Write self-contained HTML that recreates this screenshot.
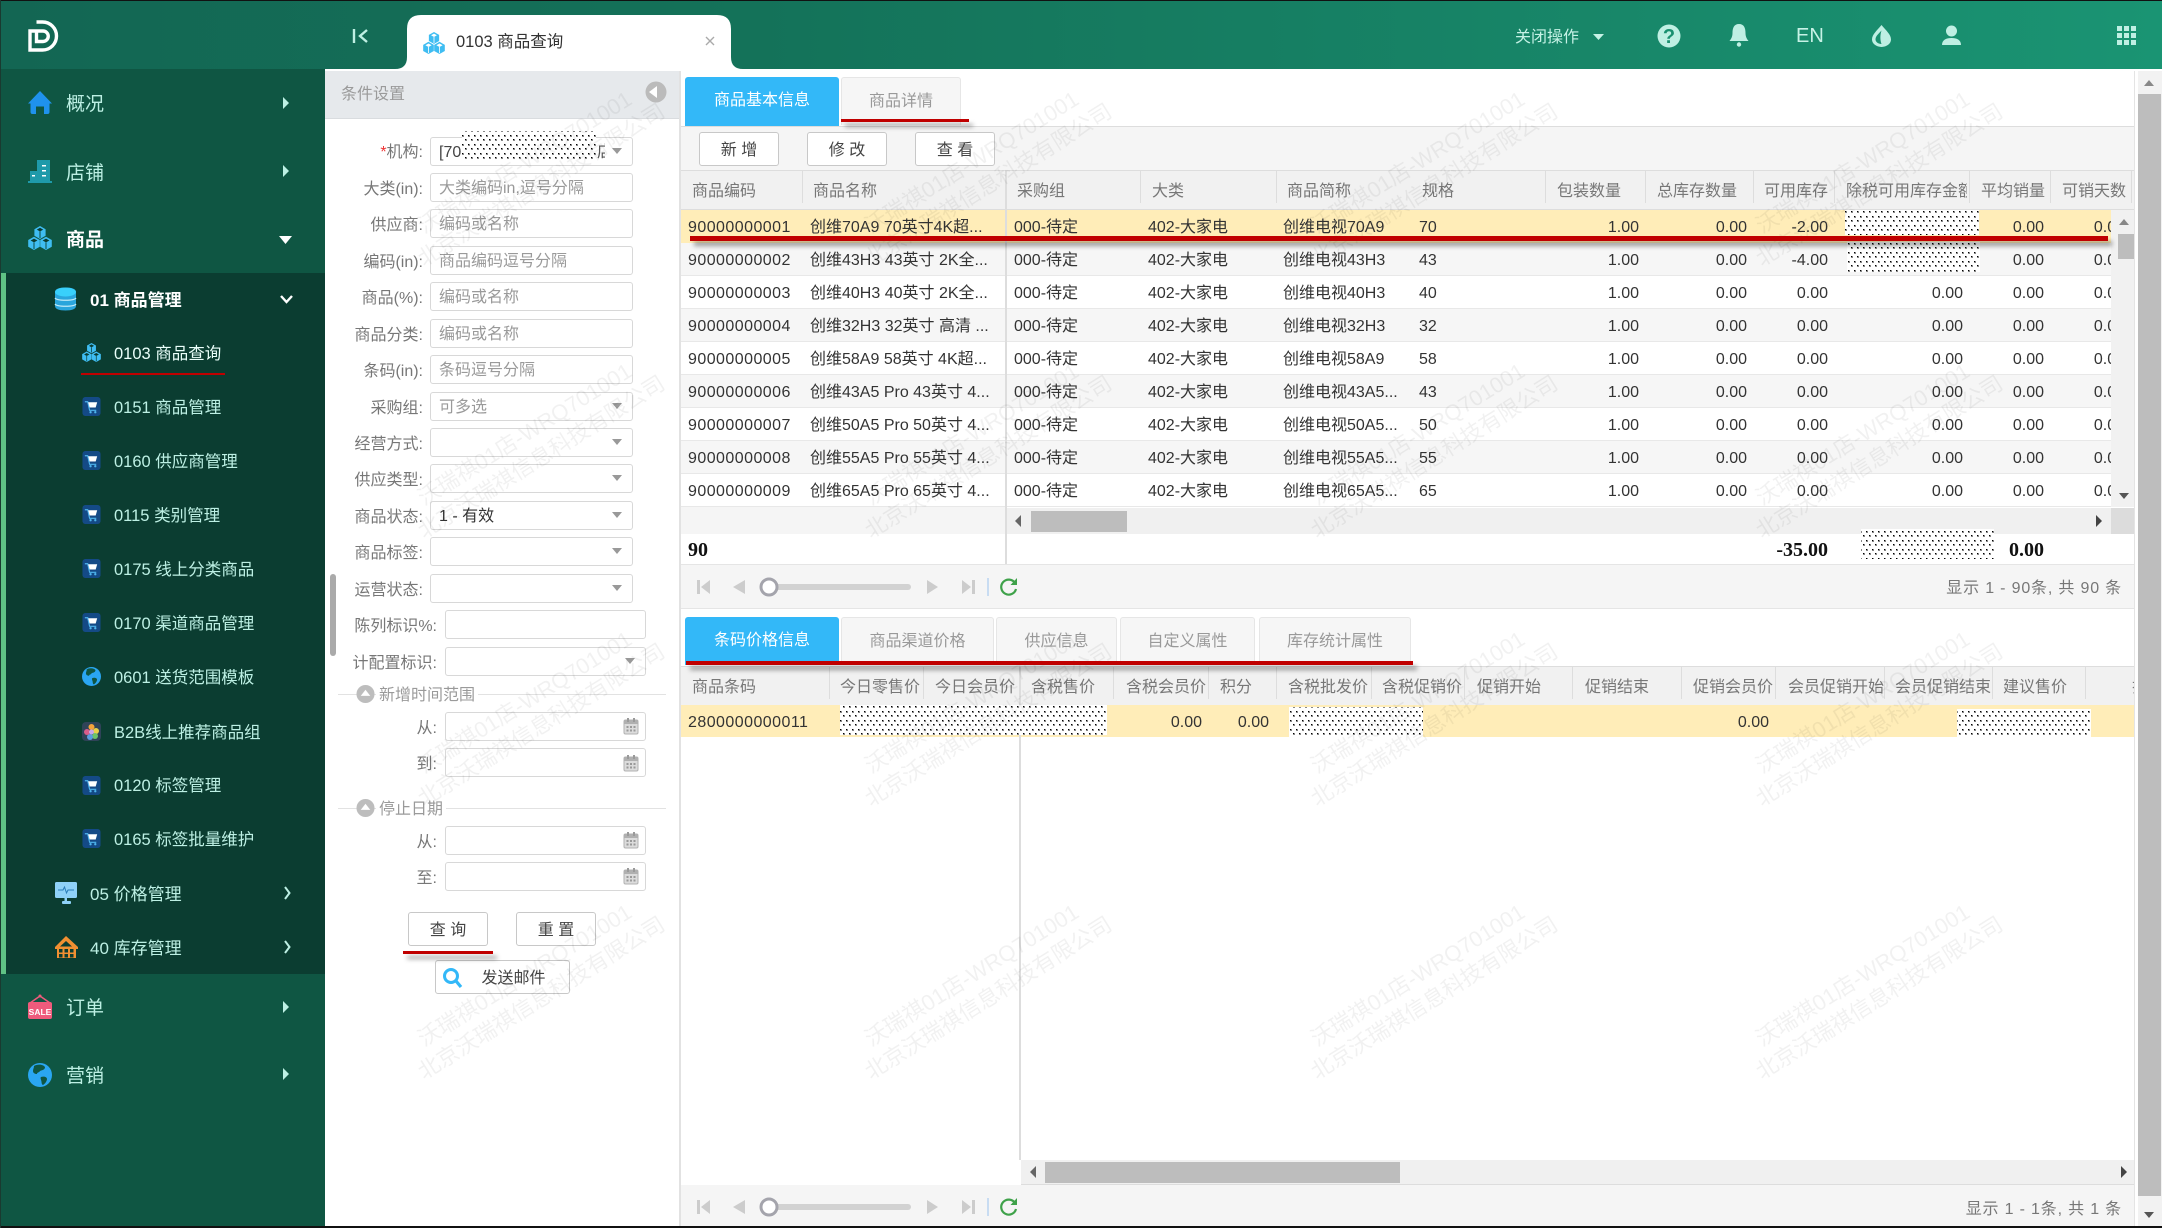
<!DOCTYPE html>
<html><head><meta charset="utf-8"><title>0103 商品查询</title>
<style>
html,body{margin:0;padding:0;width:2162px;height:1228px;overflow:hidden;background:#fff}
body{position:relative;font-family:"Liberation Sans","Noto Sans CJK SC",sans-serif;font-size:16px;color:#333}
div,span,b{position:absolute;white-space:nowrap;display:block}
svg{position:absolute;left:0;top:0}
.n1{left:66px;font-size:19px;line-height:33px;color:#bdf0e4}
.n2{left:90px;font-size:17px;line-height:29px;color:#bdf0e4}
.n3{left:114px;font-size:16.5px;line-height:29px;color:#bdf0e4}
.lb{width:130px;text-align:right;color:#777;line-height:31px}
.ip{left:430px;width:201px;height:27px;border:1px solid #d8d8d8;border-radius:3px;background:transparent;color:#9a9a9a;line-height:30px;text-indent:8px}
.ip2{left:445px;width:199px}
.bt{height:32px;width:78px;border:1px solid #c8c8c8;border-radius:3px;background:#fff;text-align:center;line-height:35px;color:#444}
.tab{height:47px;background:#f6f6f6;border:1px solid #e6e6e6;border-bottom:0;border-radius:3px 3px 0 0;text-align:center;line-height:47px;color:#999;box-sizing:border-box}
.tab.on{background:#33b8f8;color:#fff;border:0}
.hd{left:681px;width:1453px;height:38px;background:#f1f1f1;border-top:1px solid #ddd;border-bottom:1px solid #ddd;overflow:hidden}
.hd span{line-height:41px;color:#777;top:0}
.hd i{position:absolute;top:0;width:1px;height:32px;background:#ddd}
.r{left:681px;width:1430px;height:32px;border-bottom:1px solid #e8e8e8;background:#fff;overflow:hidden;line-height:35px}
.r.g{background:#f6f6f6}
.r.h{background:#ffedb8;border-bottom-color:#ffedb8}
.r span{top:0}
.r span:nth-child(1){left:7px;letter-spacing:.45px}
.r span:nth-child(2){left:129px}
.r span:nth-child(3){left:333px}
.r span:nth-child(4){left:467px}
.r span:nth-child(5){left:602px}
.r span:nth-child(6){left:738px}
.r span:nth-child(7){right:472px}
.r span:nth-child(8){right:364px}
.r span:nth-child(9){right:283px}
.r span:nth-child(10){right:148px}
.r span:nth-child(11){right:67px}
.r span:nth-child(12){right:-14px}
.rl{background:#c00000;box-shadow:4px 5px 5px rgba(0,0,0,.38)}
.pg{left:681px;width:1453px;background:#f5f5f5;border-bottom:1px solid #e5e5e5;border-top:1px solid #e5e5e5;box-sizing:border-box}
.pt{right:40px;color:#777;line-height:28px;letter-spacing:.82px}
.sb{font-family:"Liberation Serif","Noto Serif CJK SC",serif;font-weight:bold;color:#111;font-size:20px;line-height:30px}
</style></head><body>

<!-- header -->
<div style="left:0;top:1px;width:2162px;height:68px;background:linear-gradient(90deg,#136653 0%,#147259 35%,#1a9473 100%)"></div>
<div style="left:0;top:0;width:2162px;height:1px;background:#111"></div>

<!-- sidebar -->
<div style="left:1px;top:69px;width:324px;height:1157px;background:#0f5643"></div>
<div style="left:1px;top:273px;width:324px;height:701px;background:#0b3d31"></div>
<div style="left:1px;top:273px;width:5px;height:701px;background:#5fc285"></div>

<!-- panel -->
<div style="left:325px;top:71px;width:354px;height:47px;background:#e6e9ec;border-bottom:1px solid #d9dcdf"></div>
<div style="left:341px;top:79px;line-height:31px;color:#9a9a9a">条件设置</div>
<div style="left:679px;top:71px;width:2px;height:1155px;background:#e2e2e2"></div>

<!-- right scrollbar -->
<div style="left:2134px;top:69px;width:1px;height:1157px;background:#e4e4e4"></div>
<div style="left:2138px;top:69px;width:24px;height:1157px;background:#f2f2f2"></div>
<div style="left:2138px;top:94px;width:23px;height:1102px;background:#bdbdbd"></div>

<!-- upper tabs -->
<div class="tab on" style="left:685px;top:77px;width:154px;height:49px">商品基本信息</div>
<div class="tab" style="left:841px;top:77px;width:120px;height:48px">商品详情</div>
<div style="left:681px;top:126px;width:1453px;height:44px;background:#f5f5f5;border-top:1px solid #ddd"></div>
<div class="bt" style="left:699px;top:132px">新 增</div>
<div class="bt" style="left:807px;top:132px">修 改</div>
<div class="bt" style="left:915px;top:132px">查 看</div>

<!-- upper table header -->
<div class="hd" style="top:170px">
<span style="left:11px">商品编码</span><span style="left:132px">商品名称</span><span style="left:336px">采购组</span><span style="left:471px">大类</span><span style="left:606px">商品简称</span><span style="left:741px">规格</span><span style="left:876px">包装数量</span><span style="left:976px">总库存数量</span><span style="left:1083px">可用库存</span><span style="left:1165px;width:121px;overflow:hidden">除税可用库存金额</span><span style="left:1300px">平均销量</span><span style="left:1381px">可销天数</span>
<i style="left:121px"></i><i style="left:459px"></i><i style="left:595px"></i><i style="left:864px"></i><i style="left:964px"></i><i style="left:1072px"></i><i style="left:1153px"></i><i style="left:1288px"></i><i style="left:1369px"></i><i style="left:1450px"></i>
</div>

<!-- upper rows -->
<div class="r h" style="top:210px"><span>90000000001</span><span>创维70A9 70英寸4K超...</span><span>000-待定</span><span>402-大家电</span><span>创维电视70A9</span><span>70</span><span>1.00</span><span>0.00</span><span>-2.00</span><span></span><span>0.00</span><span>0.00</span></div>
<div class="r g" style="top:243px"><span>90000000002</span><span>创维43H3 43英寸 2K全...</span><span>000-待定</span><span>402-大家电</span><span>创维电视43H3</span><span>43</span><span>1.00</span><span>0.00</span><span>-4.00</span><span></span><span>0.00</span><span>0.00</span></div>
<div class="r" style="top:276px"><span>90000000003</span><span>创维40H3 40英寸 2K全...</span><span>000-待定</span><span>402-大家电</span><span>创维电视40H3</span><span>40</span><span>1.00</span><span>0.00</span><span>0.00</span><span>0.00</span><span>0.00</span><span>0.00</span></div>
<div class="r g" style="top:309px"><span>90000000004</span><span>创维32H3 32英寸 高清 ...</span><span>000-待定</span><span>402-大家电</span><span>创维电视32H3</span><span>32</span><span>1.00</span><span>0.00</span><span>0.00</span><span>0.00</span><span>0.00</span><span>0.00</span></div>
<div class="r" style="top:342px"><span>90000000005</span><span>创维58A9 58英寸 4K超...</span><span>000-待定</span><span>402-大家电</span><span>创维电视58A9</span><span>58</span><span>1.00</span><span>0.00</span><span>0.00</span><span>0.00</span><span>0.00</span><span>0.00</span></div>
<div class="r g" style="top:375px"><span>90000000006</span><span>创维43A5 Pro 43英寸 4...</span><span>000-待定</span><span>402-大家电</span><span>创维电视43A5...</span><span>43</span><span>1.00</span><span>0.00</span><span>0.00</span><span>0.00</span><span>0.00</span><span>0.00</span></div>
<div class="r" style="top:408px"><span>90000000007</span><span>创维50A5 Pro 50英寸 4...</span><span>000-待定</span><span>402-大家电</span><span>创维电视50A5...</span><span>50</span><span>1.00</span><span>0.00</span><span>0.00</span><span>0.00</span><span>0.00</span><span>0.00</span></div>
<div class="r g" style="top:441px"><span>90000000008</span><span>创维55A5 Pro 55英寸 4...</span><span>000-待定</span><span>402-大家电</span><span>创维电视55A5...</span><span>55</span><span>1.00</span><span>0.00</span><span>0.00</span><span>0.00</span><span>0.00</span><span>0.00</span></div>
<div class="r" style="top:474px"><span>90000000009</span><span>创维65A5 Pro 65英寸 4...</span><span>000-待定</span><span>402-大家电</span><span>创维电视65A5...</span><span>65</span><span>1.00</span><span>0.00</span><span>0.00</span><span>0.00</span><span>0.00</span><span>0.00</span></div>

<!-- inner scrollbars -->
<div style="left:2111px;top:210px;width:23px;height:297px;background:#f1f1f1"></div>
<div style="left:2118px;top:234px;width:16px;height:25px;background:#bdbdbd"></div>
<div style="left:681px;top:507px;width:324px;height:27px;background:#f5f5f5"></div>
<div style="left:1007px;top:508px;width:1104px;height:26px;background:#f0f0f0"></div>
<div style="left:2111px;top:508px;width:23px;height:26px;background:#dcdcdc"></div>
<div style="left:1031px;top:511px;width:96px;height:21px;background:#bdbdbd"></div>

<!-- footer -->
<div class="sb" style="left:688px;top:535px">90</div>
<div class="sb" style="right:334px;top:535px">-35.00</div>
<div class="sb" style="right:118px;top:535px">0.00</div>
<div style="left:681px;top:564px;width:1453px;height:1px;background:#ddd"></div>
<div style="left:1005px;top:171px;width:2px;height:393px;background:#ddd"></div>

<div class="pg" style="top:564px;height:45px"></div>
<div class="pt" style="top:575px">显示 1 - 90条, 共 90 条</div>

<!-- lower tabs -->
<div class="tab on" style="left:685px;top:617px;width:154px;height:48px">条码价格信息</div>
<div class="tab" style="left:841px;top:617px;width:153px;height:48px">商品渠道价格</div>
<div class="tab" style="left:996px;top:617px;width:121px;height:48px">供应信息</div>
<div class="tab" style="left:1120px;top:617px;width:135px;height:48px">自定义属性</div>
<div class="tab" style="left:1259px;top:617px;width:152px;height:48px">库存统计属性</div>

<!-- lower table header -->
<div class="hd" style="top:666px">
<span style="left:11px">商品条码</span><span style="left:159px">今日零售价</span><span style="left:254px">今日会员价</span><span style="left:350px">含税售价</span><span style="left:445px">含税会员价</span><span style="left:539px">积分</span><span style="left:607px">含税批发价</span><span style="left:701px">含税促销价</span><span style="left:796px">促销开始</span><span style="left:904px">促销结束</span><span style="left:1012px">促销会员价</span><span style="left:1107px">会员促销开始</span><span style="left:1214px">会员促销结束</span><span style="left:1322px">建议售价</span><span style="left:1451px">折</span>
<i style="left:148px"></i><i style="left:242px"></i><i style="left:432px"></i><i style="left:527px"></i><i style="left:595px"></i><i style="left:690px"></i><i style="left:783px"></i><i style="left:891px"></i><i style="left:1000px"></i><i style="left:1094px"></i><i style="left:1203px"></i><i style="left:1311px"></i><i style="left:1404px"></i>
</div>
<div style="left:681px;top:705px;width:1453px;height:32px;background:#ffedb8;line-height:35px">
<span style="left:7px;letter-spacing:.45px">2800000000011</span><span style="right:932px">0.00</span><span style="right:865px">0.00</span><span style="right:365px">0.00</span>
</div>
<div style="left:1019px;top:667px;width:2px;height:493px;background:#ddd"></div>
<div style="left:1021px;top:1160px;width:1113px;height:24px;background:#f0f0f0;border-bottom:1px solid #ddd"></div>
<div style="left:1045px;top:1162px;width:355px;height:21px;background:#bdbdbd"></div>
<div class="pg" style="top:1185px;height:41px;border-top:0;border-bottom:0"></div>
<div class="pt" style="top:1196px">显示 1 - 1条, 共 1 条</div>

<!-- sidebar text -->
<div class="n1" style="top:88px">概况</div>
<div class="n1" style="top:157px">店铺</div>
<div class="n1" style="top:224px;color:#fff;font-weight:bold">商品</div>
<div class="n2" style="top:286px;color:#fff;font-weight:bold">01 商品管理</div>
<div class="n3" style="top:340px;color:#eafffa">0103 商品查询</div>
<div class="n3" style="top:394px">0151 商品管理</div>
<div class="n3" style="top:448px">0160 供应商管理</div>
<div class="n3" style="top:502px">0115 类别管理</div>
<div class="n3" style="top:556px">0175 线上分类商品</div>
<div class="n3" style="top:610px">0170 渠道商品管理</div>
<div class="n3" style="top:664px">0601 送货范围模板</div>
<div class="n3" style="top:719px">B2B线上推荐商品组</div>
<div class="n3" style="top:772px">0120 标签管理</div>
<div class="n3" style="top:826px">0165 标签批量维护</div>
<div class="n2" style="top:880px">05 价格管理</div>
<div class="n2" style="top:934px">40 库存管理</div>
<div class="n1" style="top:992px">订单</div>
<div class="n1" style="top:1060px">营销</div>

<!-- form -->
<div class="lb" style="left:293px;top:137px"><span style="position:static;display:inline;color:#e33">*</span>机构:</div>
<div class="ip" style="top:137px;color:#444">[70</div>
<div style="left:597px;top:137px;line-height:31px;color:#555;width:8px;overflow:hidden">店</div>
<div class="lb" style="left:293px;top:174px">大类(in):</div><div class="ip" style="top:173px">大类编码in,逗号分隔</div>
<div class="lb" style="left:293px;top:210px">供应商:</div><div class="ip" style="top:209px">编码或名称</div>
<div class="lb" style="left:293px;top:247px">编码(in):</div><div class="ip" style="top:246px">商品编码逗号分隔</div>
<div class="lb" style="left:293px;top:283px">商品(%):</div><div class="ip" style="top:282px">编码或名称</div>
<div class="lb" style="left:293px;top:320px">商品分类:</div><div class="ip" style="top:319px">编码或名称</div>
<div class="lb" style="left:293px;top:356px">条码(in):</div><div class="ip" style="top:355px">条码逗号分隔</div>
<div class="lb" style="left:293px;top:393px">采购组:</div><div class="ip" style="top:392px">可多选</div>
<div class="lb" style="left:293px;top:429px">经营方式:</div><div class="ip" style="top:428px"></div>
<div class="lb" style="left:293px;top:465px">供应类型:</div><div class="ip" style="top:464px"></div>
<div class="lb" style="left:293px;top:502px">商品状态:</div><div class="ip" style="top:501px;color:#333">1 - 有效</div>
<div class="lb" style="left:293px;top:538px">商品标签:</div><div class="ip" style="top:537px"></div>
<div class="lb" style="left:293px;top:575px">运营状态:</div><div class="ip" style="top:574px"></div>
<div class="lb" style="left:307px;top:611px">陈列标识%:</div><div class="ip ip2" style="top:610px"></div>
<div class="lb" style="left:307px;top:648px">计配置标识:</div><div class="ip ip2" style="top:647px"></div>
<div style="left:338px;top:694px;width:328px;height:1px;background:#e2e2e2"></div>
<div style="left:376px;top:680px;padding:0 3px;background:#fff;line-height:31px;height:28px;color:#9a9a9a">新增时间范围</div>
<div class="lb" style="left:307px;top:713px">从:</div><div class="ip ip2" style="top:712px"></div>
<div class="lb" style="left:307px;top:749px">到:</div><div class="ip ip2" style="top:748px"></div>
<div style="left:338px;top:808px;width:328px;height:1px;background:#e2e2e2"></div>
<div style="left:376px;top:794px;padding:0 3px;background:#fff;line-height:31px;height:28px;color:#9a9a9a">停止日期</div>
<div class="lb" style="left:307px;top:827px">从:</div><div class="ip ip2" style="top:826px"></div>
<div class="lb" style="left:307px;top:863px">至:</div><div class="ip ip2" style="top:862px"></div>
<div class="bt" style="left:408px;top:912px">查 询</div>
<div class="bt" style="left:516px;top:912px">重 置</div>
<div class="bt" style="left:435px;top:960px;width:133px;text-indent:22px">发送邮件</div>
<div style="left:330px;top:574px;width:6px;height:82px;background:#aaa;border-radius:3px"></div>

<!-- tab text -->
<div style="left:456px;top:28px;font-size:16.5px;line-height:29px;color:#333;z-index:3">0103 商品查询</div>
<div style="left:1515px;top:23px;line-height:29px;color:#c6f2e6;font-size:16px">关闭操作</div>
<div style="left:1796px;top:20px;line-height:33px;color:#c6f2e6;font-size:20px">EN</div>

<!-- icons -->
<svg width="2162" height="1228" viewBox="0 0 2162 1228" style="z-index:2">
<defs>
<symbol id="cube3" viewBox="0 0 24 24">
<g fill="#3fbdf2">
<path d="M12 0l5.600 3.200v6.600L12 13l-5.600-3.200V3.200z"/>
<path d="M6 10.700l5.800 3.300v6.700L6 24 .2 20.700V14z"/>
<path d="M18 10.700l5.800 3.300v6.700L18 24l-5.800-3.300V14z"/>
</g>
<g fill="currentColor">
<path d="M12 1.800l3.200 1.800-3.200 1.900-3.200-1.900z"/>
<path d="M6 12.600l3.400 1.900L6 16.400l-3.400-1.900z"/>
<path d="M18 12.600l3.400 1.900-3.400 1.900-3.400-1.900z"/>
</g>
<path d="M12 5.500v6.500M6 16.400V23M18 16.400V23" stroke="currentColor" stroke-width=".9" fill="none"/>
</symbol>
<symbol id="cart" viewBox="0 0 20 20">
<rect width="19" height="20" x=".5" rx="3" fill="#144a86"/>
<path d="M3 5h3l2 9h7" fill="none" stroke="#4fb6ee" stroke-width="1.2"/>
<path d="M6.500 5.500H16l-1.600 5.500H8z" fill="#fff"/>
<circle cx="9" cy="16" r="1.200" fill="#4fb6ee"/><circle cx="14" cy="16" r="1.200" fill="#4fb6ee"/>
</symbol>
<symbol id="globe" viewBox="0 0 24 24">
<circle cx="12" cy="12" r="12" fill="#2aa6f2"/>
<path d="M6 3c3-2 9-2 11 1 0 3-3 3-5 4-1 2-3 1-3 3-2 0-4-1-4-3 0-2 1-3 1-5zM13 14c3-1 6 0 6 2s-2 5-4 6c-2-1-1-3-2-5 0-1-1-2 0-3z" fill="#0f5643"/>
</symbol>
<symbol id="cal" viewBox="0 0 16 18">
<rect x="1" y="3" width="14" height="14" rx="1.500" fill="#dcdcdc" stroke="#b2b2b2"/><rect x="1" y="3" width="14" height="4" fill="#b0b0b0"/>
<rect x="4" y="1" width="2" height="4" fill="#9a9a9a"/><rect x="10" y="1" width="2" height="4" fill="#9a9a9a"/>
<g fill="#999"><rect x="3.500" y="9" width="2" height="2"/><rect x="7" y="9" width="2" height="2"/><rect x="10.500" y="9" width="2" height="2"/><rect x="3.500" y="12.500" width="2" height="2"/><rect x="7" y="12.500" width="2" height="2"/><rect x="10.500" y="12.500" width="2" height="2"/></g>
</symbol>
<symbol id="grp" viewBox="0 0 20 20"><circle cx="10" cy="10" r="9.500" fill="#bdbdbd"/><path d="M10 5.500l5 6.500H5z" fill="#fff"/></symbol>
</defs>

<!-- logo -->
<g fill="none" stroke="#fff" stroke-width="3.400">
<path d="M36.500 22H42.500A14 14 0 0 1 42.500 50H30V31H36.500V41.500H43A5.200 5.200 0 0 0 43 31H36.500"/>
</g>
<!-- collapse -->
<path d="M354 29v14" stroke="#bfefe3" stroke-width="2.400"/><path d="M367 30l-7 6 7 6" fill="none" stroke="#bfefe3" stroke-width="2.400"/>
<!-- tab -->
<path d="M395 69Q407 69 407 57V29Q407 15 421 15H717Q731 15 731 29V57Q731 69 743 69Z" fill="#fff"/>
<rect x="325" y="69" width="1837" height="2" fill="#fff"/>
<use href="#cube3" x="423" y="32" width="22" height="22" color="#fff"/>
<path d="M706 37l8 8M714 37l-8 8" stroke="#aaa" stroke-width="1.400"/>
<!-- header right -->
<path d="M1593 34h11l-5.500 6z" fill="#c6f2e6"/>
<ellipse cx="1669" cy="36" rx="11.500" ry="11.500" fill="#bfefe3"/>
<text x="1669" y="43" text-anchor="middle" font-family="Liberation Sans" font-weight="bold" font-size="20" fill="#1a9070">?</text>
<path d="M1739 24c5 0 6.500 4 6.500 9 0 4 1.500 6 3 8h-19c1.500-2 3-4 3-8 0-5 1.500-9 6.500-9z" fill="#bfefe3"/><circle cx="1739" cy="44.500" r="2.200" fill="#bfefe3"/>
<path d="M1881.500 25c4.500 5.500 9.500 9.500 9.500 14.500a9.500 7.500 0 0 1-19 0c0-5 5-9 9.500-14.500z" fill="#bfefe3"/><path d="M1881.500 30.500c-3 3.500-6 5.500-6 9 0 2.500 3 4.500 6 4.500-1.500-4-1.500-9 0-13.500z" fill="#1a9070"/>
<circle cx="1951.500" cy="31" r="5.500" fill="#bfefe3"/><path d="M1942 45c0-5 4-7 9.500-7s9.500 2 9.500 7z" fill="#bfefe3"/>
<g fill="#bfefe3"><rect x="2117" y="26" width="5" height="5"/><rect x="2124" y="26" width="5" height="5"/><rect x="2131" y="26" width="5" height="5"/><rect x="2117" y="33" width="5" height="5"/><rect x="2124" y="33" width="5" height="5"/><rect x="2131" y="33" width="5" height="5"/><rect x="2117" y="40" width="5" height="5"/><rect x="2124" y="40" width="5" height="5"/><rect x="2131" y="40" width="5" height="5"/></g>

<!-- sidebar icons -->
<path d="M40 91L52 103.500H49.500V112Q49.500 114 47.500 114H44V106.500H36V114H32.500Q30.500 114 30.500 112V103.500H28Z" fill="#1f92ec"/>
<path d="M37 160H50V181H52V183H28V181H30V171H37Z" fill="#1f9aaa"/><g fill="#fff"><rect x="42" y="165" width="4" height="1.500"/><rect x="42" y="170" width="4" height="1.500"/><rect x="42" y="175" width="4" height="1.500"/><rect x="32" y="175" width="3" height="1.500"/></g>
<use href="#cube3" x="28" y="226" width="24" height="24" color="#0b3d31"/>
<path d="M55 292c0-3 4-4.500 10.500-4.500S76 289 76 292v14c0 3-4 4.500-10.500 4.500S55 309 55 306z" fill="#2aa5dc"/>
<ellipse cx="65.500" cy="292" rx="10.500" ry="4.500" fill="#39d0fb"/>
<path d="M55 298c2 3 19 3 21 0M55 304c2 3 19 3 21 0" stroke="#bfeaf8" stroke-width="1.200" fill="none"/>
<use href="#cube3" x="82" y="343" width="19" height="19" color="#0b3d31"/>
<use href="#cart" x="82" y="397" width="19" height="19"/>
<use href="#cart" x="82" y="451" width="19" height="19"/>
<use href="#cart" x="82" y="505" width="19" height="19"/>
<use href="#cart" x="82" y="559" width="19" height="19"/>
<use href="#cart" x="82" y="613" width="19" height="19"/>
<use href="#globe" x="82" y="667" width="19" height="19"/>
<rect x="82" y="722" width="19" height="19" rx="4" fill="#2f4358"/>
<circle cx="91.500" cy="727" r="3" fill="#f5a33a"/><circle cx="96" cy="731" r="3" fill="#e9d04a"/><circle cx="95" cy="736" r="3" fill="#6cc36a"/><circle cx="90" cy="737" r="3" fill="#5a9de0"/><circle cx="87" cy="732" r="3" fill="#d85d8a"/><circle cx="91.500" cy="732" r="2.500" fill="#c8a8e8"/>
<use href="#cart" x="82" y="776" width="19" height="19"/>
<use href="#cart" x="82" y="829" width="19" height="19"/>
<!-- monitor -->
<rect x="55" y="882" width="22" height="16" rx="1.500" fill="#8fd2f8"/><path d="M58 890h5l1.500-3 2 6 1.500-3h6" stroke="#2a7db8" fill="none"/><rect x="64.500" y="898" width="2.500" height="4" fill="#8fd2f8"/><rect x="62" y="901" width="9" height="3" rx="1" fill="#8fd2f8"/>
<!-- house orange -->
<path d="M66 936L78 947V949H76V958H57V949H55V947Z" fill="#f19032"/><path d="M66 941L60 946.500H72Z" fill="#0b3d31"/><g fill="#0b3d31"><rect x="59" y="949" width="3.500" height="3.500"/><rect x="64.500" y="949" width="3.500" height="3.500"/><rect x="70" y="949" width="3.500" height="3.500"/><rect x="59" y="954" width="3.500" height="3.500"/><rect x="64.500" y="954" width="3.500" height="3.500"/><rect x="70" y="954" width="3.500" height="3.500"/></g>
<!-- sale -->
<path d="M40 996L30 1003M40 996L50 1003" stroke="#ef5b7c" stroke-width="1.500"/><circle cx="40" cy="996" r="1.500" fill="#ef5b7c"/>
<rect x="28" y="1002" width="24" height="17" rx="2" fill="#ef5b7c"/>
<text x="40" y="1015" text-anchor="middle" font-family="Liberation Sans" font-weight="bold" font-size="8.500" fill="#fff">SALE</text>
<use href="#globe" x="28" y="1063" width="24" height="24"/>
<!-- sidebar arrows -->
<g fill="#bdf0e4"><path d="M283 97l6 6-6 6z"/><path d="M283 165l6 6-6 6z"/><path d="M283 1001l6 6-6 6z"/><path d="M283 1068l6 6-6 6z"/></g>
<path d="M279 236h13l-6.500 8z" fill="#fff"/>
<path d="M281 296l5.500 6 5.500-6" fill="none" stroke="#fff" stroke-width="2.400"/>
<path d="M285 887l4.500 6-4.500 6M285 941l4.500 6-4.500 6" fill="none" stroke="#bdf0e4" stroke-width="2"/>
<!-- panel collapse -->
<circle cx="656" cy="92" r="10.500" fill="#bbb"/><path d="M649 92l8-6v12z" fill="#fff"/>
<!-- carets in form -->
<g fill="#999"><path d="M612 148h10l-5 6z"/><path d="M612 403h10l-5 6z"/><path d="M612 439h10l-5 6z"/><path d="M612 475h10l-5 6z"/><path d="M612 512h10l-5 6z"/><path d="M612 548h10l-5 6z"/><path d="M612 585h10l-5 6z"/><path d="M625 658h10l-5 6z"/></g>
<use href="#cal" x="623" y="717" width="16" height="18"/><use href="#cal" x="623" y="754" width="16" height="18"/><use href="#cal" x="623" y="831" width="16" height="18"/><use href="#cal" x="623" y="867" width="16" height="18"/>
<use href="#grp" x="356" y="684" width="19" height="20"/><use href="#grp" x="356" y="798" width="19" height="20"/>
<!-- search -->
<circle cx="451" cy="976" r="6.500" fill="none" stroke="#33b8f8" stroke-width="3"/><path d="M456 981l5 6" stroke="#33b8f8" stroke-width="3.200"/>
<!-- scrollbar arrows -->
<g fill="#888"><path d="M2144 86h10l-5-6z"/><path d="M2119 225h10l-5-6z"/></g>
<path d="M2144 1212h10l-5 6zM2119 493h10l-5 6z" fill="#555"/>
<path d="M1021 515v12l-6-6z" fill="#666"/>
<path d="M2096 515v12l6-6z" fill="#444"/>
<path d="M1036 1166v12l-6-6z" fill="#666"/>
<path d="M2121 1166v12l6-6z" fill="#444"/>
<!-- pagination upper -->
<g fill="#ccc">
<rect x="697" y="580" width="3" height="14"/><path d="M710 580v14l-9-7z"/><path d="M745 580v14l-12-7z"/><path d="M927 580v14l11-7z"/><path d="M962 580v14l9-7z"/><rect x="972" y="580" width="3" height="14"/>
<rect x="697" y="1200" width="3" height="14"/><path d="M710 1200v14l-9-7z"/><path d="M745 1200v14l-12-7z"/><path d="M927 1200v14l11-7z"/><path d="M962 1200v14l9-7z"/><rect x="972" y="1200" width="3" height="14"/>
</g>
<rect x="762" y="584" width="149" height="6" rx="3" fill="#d2d2d2"/><circle cx="769" cy="587" r="8" fill="#fff" stroke="#a4a4ac" stroke-width="3"/>
<rect x="762" y="1204" width="149" height="6" rx="3" fill="#d2d2d2"/><circle cx="769" cy="1207" r="8" fill="#fff" stroke="#a4a4ac" stroke-width="3"/>
<path d="M988 578v18M988 1198v18" stroke="#9cc4ee"/>
<path d="M1015 583a7.500 7.500 0 1 0 1 6M1015 1203a7.500 7.500 0 1 0 1 6" fill="none" stroke="#3fa24a" stroke-width="2.200"/>
<path d="M1017 578v7h-6.500zM1017 1198v7h-6.500z" fill="#3fa24a"/>
</svg>

<!-- red lines -->
<div style="left:81px;top:373px;width:144px;height:2px;background:#c00000;z-index:5"></div>
<div class="rl" style="left:841px;top:119px;width:128px;height:3px;z-index:5"></div>
<div class="rl" style="left:690px;top:236px;width:1418px;height:5px;z-index:5"></div>
<div class="rl" style="left:686px;top:661px;width:727px;height:4px;z-index:5"></div>
<div class="rl" style="left:403px;top:951px;width:90px;height:3px;z-index:5"></div>

<!-- dots + watermark -->
<svg width="2162" height="1228" viewBox="0 0 2162 1228" style="z-index:4;pointer-events:none">
<defs><pattern id="d" width="6" height="9" patternUnits="userSpaceOnUse"><rect width="6" height="9" fill="#fff"/><rect x="0" y="0" width="2" height="2" fill="#888"/><rect x="0" y="0" width="1" height="1" fill="#000"/><rect x="3" y="4" width="2" height="2" fill="#888"/><rect x="3" y="4" width="1" height="1" fill="#000"/></pattern></defs>
<g fill="url(#d)">
<rect x="462" y="131" width="134" height="30"/>
<rect x="1845" y="210" width="134" height="25"/>
<rect x="1847" y="242" width="133" height="30"/>
<rect x="1861" y="529" width="133" height="30"/>
<rect x="840" y="705" width="267" height="30"/>
<rect x="1289" y="707" width="134" height="30"/>
<rect x="1957" y="709" width="134" height="29"/>
</g>
<g font-family="Liberation Sans,Noto Sans CJK SC,sans-serif" font-size="22" fill="rgba(0,0,0,.055)">
<g transform="translate(424 234) rotate(-32)"><text>沃瑞祺01店-WRQ701001</text><text x="-17.500" y="28">北京沃瑞祺信息科技有限公司</text></g>
<g transform="translate(871 234) rotate(-32)"><text>沃瑞祺01店-WRQ701001</text><text x="-17.500" y="28">北京沃瑞祺信息科技有限公司</text></g>
<g transform="translate(1317 234) rotate(-32)"><text>沃瑞祺01店-WRQ701001</text><text x="-17.500" y="28">北京沃瑞祺信息科技有限公司</text></g>
<g transform="translate(1762 234) rotate(-32)"><text>沃瑞祺01店-WRQ701001</text><text x="-17.500" y="28">北京沃瑞祺信息科技有限公司</text></g>
<g transform="translate(424 506) rotate(-32)"><text>沃瑞祺01店-WRQ701001</text><text x="-17.500" y="28">北京沃瑞祺信息科技有限公司</text></g>
<g transform="translate(871 506) rotate(-32)"><text>沃瑞祺01店-WRQ701001</text><text x="-17.500" y="28">北京沃瑞祺信息科技有限公司</text></g>
<g transform="translate(1317 506) rotate(-32)"><text>沃瑞祺01店-WRQ701001</text><text x="-17.500" y="28">北京沃瑞祺信息科技有限公司</text></g>
<g transform="translate(1762 506) rotate(-32)"><text>沃瑞祺01店-WRQ701001</text><text x="-17.500" y="28">北京沃瑞祺信息科技有限公司</text></g>
<g transform="translate(424 774) rotate(-32)"><text>沃瑞祺01店-WRQ701001</text><text x="-17.500" y="28">北京沃瑞祺信息科技有限公司</text></g>
<g transform="translate(871 774) rotate(-32)"><text>沃瑞祺01店-WRQ701001</text><text x="-17.500" y="28">北京沃瑞祺信息科技有限公司</text></g>
<g transform="translate(1317 774) rotate(-32)"><text>沃瑞祺01店-WRQ701001</text><text x="-17.500" y="28">北京沃瑞祺信息科技有限公司</text></g>
<g transform="translate(1762 774) rotate(-32)"><text>沃瑞祺01店-WRQ701001</text><text x="-17.500" y="28">北京沃瑞祺信息科技有限公司</text></g>
<g transform="translate(424 1047) rotate(-32)"><text>沃瑞祺01店-WRQ701001</text><text x="-17.500" y="28">北京沃瑞祺信息科技有限公司</text></g>
<g transform="translate(871 1047) rotate(-32)"><text>沃瑞祺01店-WRQ701001</text><text x="-17.500" y="28">北京沃瑞祺信息科技有限公司</text></g>
<g transform="translate(1317 1047) rotate(-32)"><text>沃瑞祺01店-WRQ701001</text><text x="-17.500" y="28">北京沃瑞祺信息科技有限公司</text></g>
<g transform="translate(1762 1047) rotate(-32)"><text>沃瑞祺01店-WRQ701001</text><text x="-17.500" y="28">北京沃瑞祺信息科技有限公司</text></g>
</g>
</svg>

<!-- window edges -->
<div style="left:0;top:1226px;width:2162px;height:2px;background:#111;z-index:9"></div>
<div style="left:0;top:0;width:1px;height:1228px;background:#1a3a30;z-index:9"></div>
</body></html>
